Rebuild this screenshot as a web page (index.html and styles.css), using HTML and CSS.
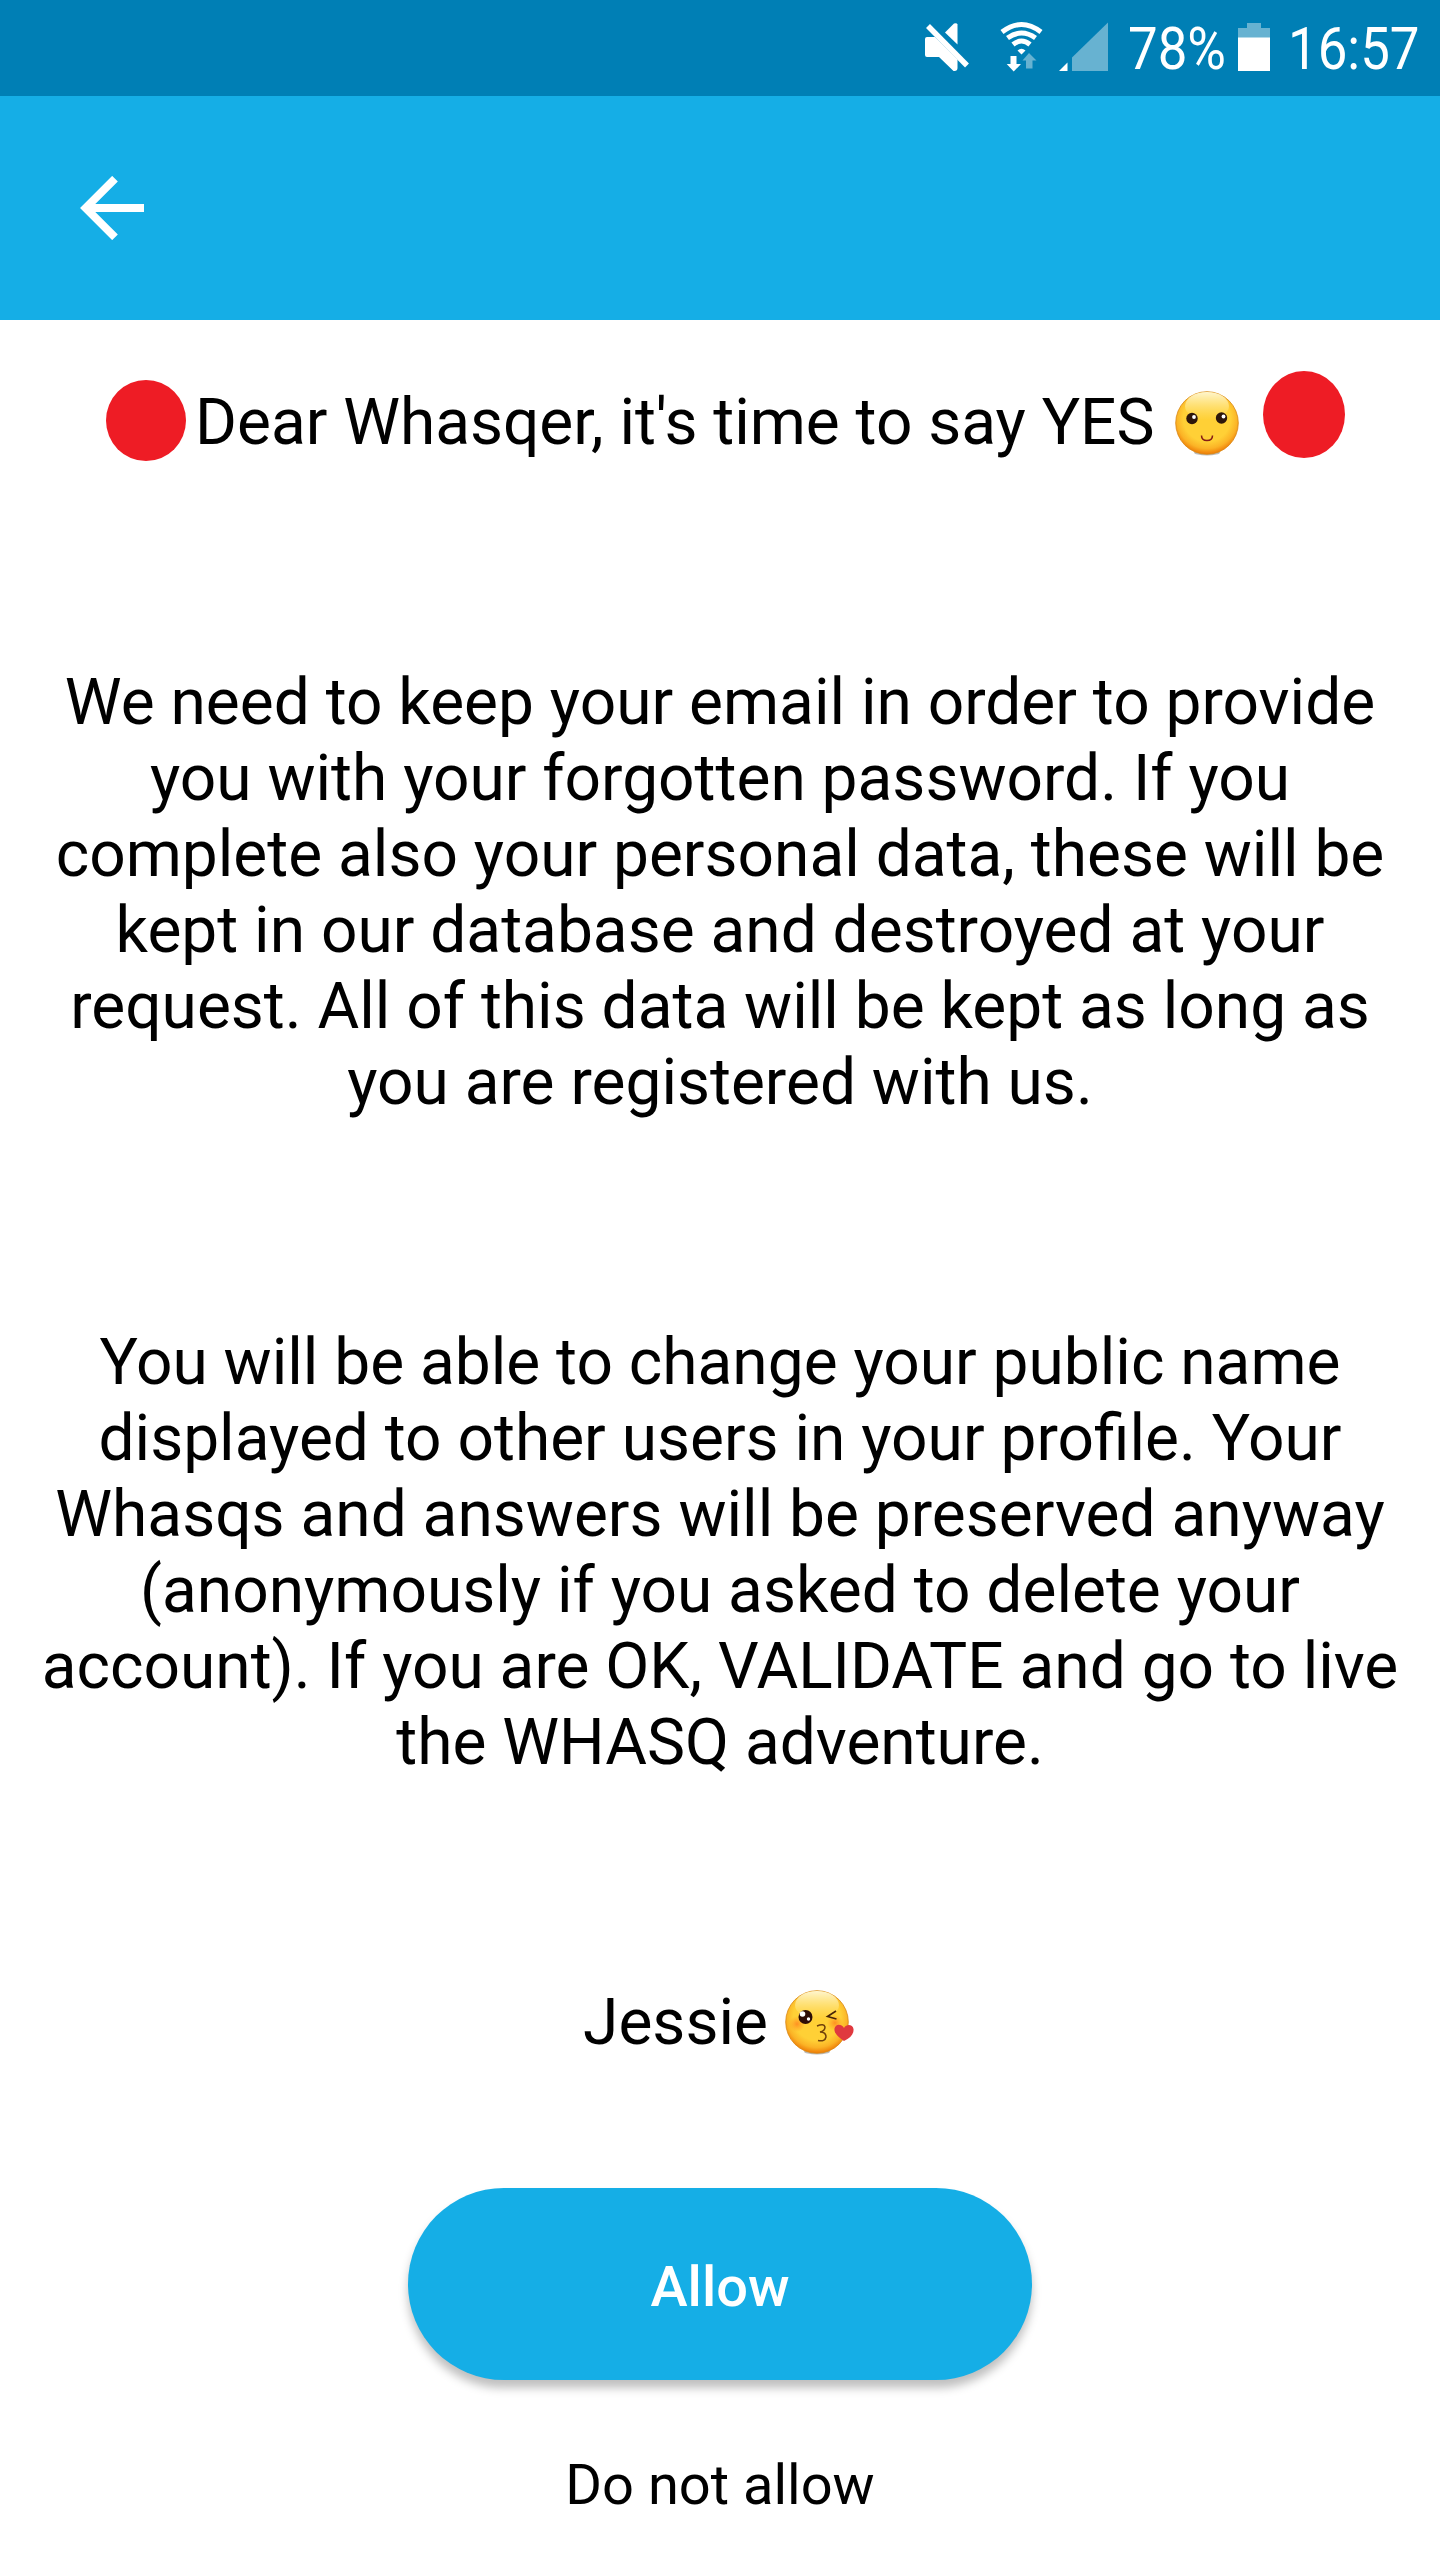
FILE: index.html
```html
<!DOCTYPE html>
<html lang="en">
<head>
<meta charset="utf-8">
<title>Whasq</title>
<link rel="stylesheet" href="styles.css">
</head>
<body>
<header>
  <div class="status-bar">
    <svg class="status-icons" width="220" height="96" viewBox="900 0 220 96" fill="#fff">
      <path d="M925 39q0-2 2-2h8l22.500 22.500v8.500q0 3-3 3h-1l-14.500-14h-12q-2 0-2-2z"/>
      <path d="M945 32.500l9-9q3-1 3.500 1v20z"/>
      <path d="M928 26l39 39.500" stroke="#fff" stroke-width="5.500"/>
      <g fill="none" stroke="#fff" stroke-width="5">
        <path d="M1002 32q19.500-15 39 0"/><path d="M1007.500 38q14-10 28 0"/><path d="M1013 44.500q8.500-7 17 0"/>
      </g>
      <path d="M1017.500 50.500q4-3.500 8 0l-4 4z"/>
      <path d="M1010.500 56h6v8h4.500l-7.300 7.500-7-7.500h3.800z"/>
      <path d="M1026 68.500h6.500v-8h4l-7.500-7.500-6.500 7.500h3.500z" fill="#67b2d1"/>
      <path d="M1059 71h8.500v-8.500z"/>
      <path d="M1072 71V57.500L1108 22.500V71z" fill="#67b2d1"/>
    </svg>
    <span class="battery-level">78%</span>
    <svg class="battery" width="32" height="96" viewBox="0 0 32 96">
      <path d="M0 38V28h9v-5h14v5h9v10z" fill="#67b2d1"/><path d="M0 37.500h32V71H0z" fill="#fff"/>
    </svg>
    <span class="clock">16:57</span>
  </div>
  <nav class="toolbar">
    <svg class="back" width="64" height="64" viewBox="80 176 64 64"><path d="M115 178.700L85.700 208l29.300 29.300M87 208h57" fill="none" stroke="#fff" stroke-width="8"/></svg>
  </nav>
</header>
<main>
  <div class="greeting">
    <svg class="dot" width="80" height="81" viewBox="0 0 80 81"><ellipse cx="40" cy="40.500" rx="40" ry="40.500"/></svg>
    <h1>Dear Whasqer, it's time to say YES</h1>
    <svg class="smile" width="66" height="66" viewBox="0 0 66 66">
      <defs>
        <radialGradient id="skin" cx=".5" cy=".42" r=".58"><stop offset=".65" stop-color="#ffd036"/><stop offset=".84" stop-color="#fbb326"/><stop offset="1" stop-color="#ee7a05"/></radialGradient>
        <linearGradient id="shine" x2="0" y2="1"><stop stop-color="#fff6cf"/><stop offset="1" stop-color="#ffe88a" stop-opacity="0"/></linearGradient>
        <radialGradient id="blush"><stop stop-color="#ff8a20" stop-opacity=".9"/><stop offset="1" stop-color="#ff9a20" stop-opacity="0"/></radialGradient>
      </defs>
      <ellipse cx="33" cy="61.500" rx="13" ry="3" fill="#777" opacity=".5"/>
      <circle cx="33" cy="32" r="31.300" fill="url(#skin)" stroke="#d88813" stroke-width=".8"/>
      <ellipse cx="33" cy="15" rx="22" ry="14" fill="url(#shine)"/>
      <circle cx="18" cy="27.500" r="5.700" fill="#2d160b"/><circle cx="47.500" cy="27" r="5.700" fill="#2d160b"/>
      <circle cx="20" cy="26" r="1.900" fill="#fff"/><circle cx="49.500" cy="25.500" r="1.900" fill="#fff"/>
      <path d="M27.500 44.500q0 5 5.500 5t5.500-5" fill="none" stroke="#861b16" stroke-width="1.500"/>
    </svg>
    <svg class="dot dot-end" width="82" height="87" viewBox="0 0 82 87"><ellipse cx="41" cy="43.500" rx="41" ry="43.500"/></svg>
  </div>
  <p class="storage">We need to keep your email in order to provide<br>you with your forgotten password. If you<br>complete also your personal data, these will be<br>kept in our database and destroyed at your<br>request. All of this data will be kept as long as<br>you are registered with us.</p>
  <p class="profile">You will be able to change your public name<br>displayed to other users in your profile. Your<br>Whasqs and answers will be preserved anyway<br>(anonymously if you asked to delete your<br>account). If you are OK, VALIDATE and go to live<br>the WHASQ adventure.</p>
  <div class="signature">
    <span>Jessie</span>
    <svg width="72" height="66" viewBox="0 0 72 66">
      <ellipse cx="33" cy="61.500" rx="13" ry="3" fill="#777" opacity=".5"/>
      <circle cx="33" cy="32" r="31.300" fill="url(#skin)" stroke="#d88813" stroke-width=".8"/>
      <ellipse cx="33" cy="15" rx="22" ry="14" fill="url(#shine)"/>
      <circle cx="13" cy="34" r="8" fill="url(#blush)"/><circle cx="51" cy="33" r="8" fill="url(#blush)"/>
      <circle cx="21.500" cy="27" r="7" fill="#2d0d06"/><circle cx="18.500" cy="24" r="2.800" fill="#fff"/><circle cx="24.500" cy="29" r="1.700" fill="#fff"/>
      <path d="M52 21l-8.500 5.500 9 2.500" fill="none" stroke="#472407" stroke-width="1.600"/>
      <path d="M33 36q7-3 8 1 0 4-5 5 6 0 6 5-1 5-8 3.500" fill="none" stroke="#70400b" stroke-width="1.500"/>
      <path d="M60 51C53 46 50 43 50.500 38.500c1-5 7-5 9.500-.5 3-5 9-3 9.500 1 .5 5-3 9-9.500 12z" fill="#e0393e"/>
    </svg>
  </div>
  <button class="allow">Allow</button>
  <button class="deny">Do not allow</button>
</main>
</body>
</html>
```

FILE: styles.css
```css
* { box-sizing: border-box; }
body { margin: 0; width: 1440px; height: 2560px; overflow: hidden; background: #fff; color: #000; font-family: Roboto, sans-serif; }
svg { display: block; flex: none; }
.status-bar { height: 96px; background: #007fb5; color: #fff; display: flex; align-items: flex-start; padding-left: 900px; font-size: 60px; line-height: 98px; white-space: nowrap; }
.battery-level, .clock { display: block; transform: scaleX(.88); transform-origin: left; }
.battery-level { width: 110px; margin-left: 8px; }
.clock { margin-left: 18px; }
.toolbar { height: 224px; background: #15aee6; padding: 80px; }
main { display: flex; flex-direction: column; align-items: center; font-size: 64px; line-height: 76px; }
.greeting { width: 100%; height: 140px; padding: 60px 0 0 106px; display: flex; align-items: flex-start; }
h1 { margin: 5px 0 0 9px; width: 961px; font: inherit; letter-spacing: -.03px; white-space: nowrap; }
.smile { margin: 11px 0 0 18px; }
.dot { fill: #ee1c25; }
.dot-end { margin: -9px 0 0 23px; }
p { margin: 0; text-align: center; white-space: nowrap; }
.storage { margin-top: 205px; }
.profile { margin-top: 204px; }
.signature { margin-top: 204px; display: flex; align-items: center; gap: 16px; padding-right: 1px; }
button { border: 0; font: inherit; font-size: 56px; line-height: 66px; }
.allow { width: 624px; height: 192px; margin-top: 127px; padding: 6px 0 0; border-radius: 96px; background: #15aee6; color: #fff; font-weight: 500; box-shadow: 0 8px 10px rgba(0,0,0,.25); }
.deny { background: none; margin-top: 72px; padding: 0; }
```
